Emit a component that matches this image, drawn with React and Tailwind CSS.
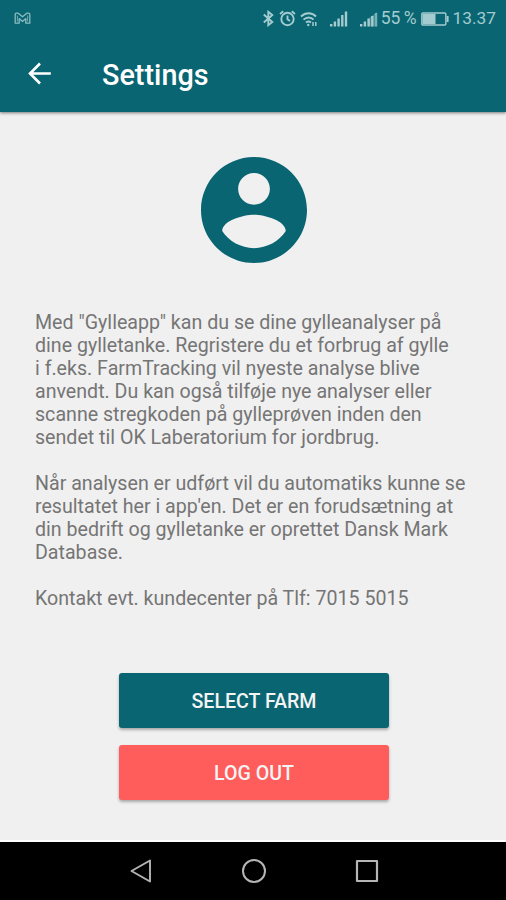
const infoLines = [
  ['Med "Gylleapp" kan du se dine gylleanalyser på', 'dine gylletanke. Regristere du et forbrug af gylle', 'i f.eks. FarmTracking vil nyeste analyse blive', 'anvendt. Du kan også tilføje nye analyser eller', 'scanne stregkoden på gylleprøven inden den', 'sendet til OK Laberatorium for jordbrug.'],
  ['Når analysen er udført vil du automatiks kunne se', "resultatet her i app'en. Det er en forudsætning at", 'din bedrift og gylletanke er oprettet Dansk Mark', 'Database.'],
  ['Kontakt evt. kundecenter på Tlf: 7015 5015'],
]

function IconSignal({ className, shaded }) {
  return (
    <svg width="18" height="16" viewBox="0 0 18 16" fill="currentColor" className={className}>
      {shaded && <path d="M9 15.5V7L17.2 1V15.5Z" opacity="0.35" />}
      <rect x="0" y="13" width="2.4" height="2.5" />
      <rect x="3.7" y="10.5" width="2.4" height="5" />
      <rect x="7.4" y="7.5" width="2.4" height="8" />
      <rect x="11.1" y={shaded ? 5 : 4} width="2.4" height={shaded ? 10.5 : 11.5} />
      <rect x="14.8" y={shaded ? 2 : 0.5} width="2.4" height={shaded ? 13.5 : 15} opacity={shaded ? 0.6 : 1} />
    </svg>
  )
}

function StatusBar() {
  return (
    <div className="flex h-9 items-center pt-px pr-[10px] pl-[14px] text-[#a3cbd0]">
      <svg width="17" height="13" viewBox="0 0 17 13" fill="none" stroke="currentColor" strokeWidth="1.3" strokeLinejoin="round" className="opacity-85">
        <path d="M1.2 2.5Q1.2 1.2 2.5 1.2H4.2L8.5 4.8L12.8 1.2H14.5Q15.8 1.2 15.8 2.5V11.2H11.8V6.6L8.5 9.4L5.2 6.6V11.2H1.2Z" />
        <path d="M3.4 3.5V9.5M13.6 3.5V9.5" strokeWidth="0.8" />
      </svg>
      <svg width="11" height="17" viewBox="0 0 11 17" fill="none" stroke="currentColor" strokeWidth="1.9" className="ml-auto">
        <path d="M0.8 4.5L9.3 12L5.3 15.2V1.8L9.3 5L0.8 12.5" />
      </svg>
      <svg width="17" height="17" viewBox="0 0 17 17" fill="none" stroke="currentColor" strokeWidth="1.9" className="ml-[5px]">
        <circle cx="8.5" cy="9" r="6.2" />
        <path d="M8.5 5.5V9.3L11 11M1 4L4.2 1.3M16 4L12.8 1.3" />
      </svg>
      <svg width="18" height="16" viewBox="0 0 18 16" fill="none" stroke="currentColor" strokeWidth="1.9" className="ml-[4px]">
        <path d="M1 5.5C5.5 1.2 12 1.2 16 5.5M3.5 8.7C6.5 5.7 11 5.7 13.5 8.7M6 11.5C7.5 10.2 9.5 10.2 11 11.5" />
        <circle cx="8.3" cy="14" r="1.2" fill="currentColor" stroke="none" />
        <path d="M13 11V15M15.8 11V15" strokeWidth="1.5" />
      </svg>
      <IconSignal className="ml-[12px]" />
      <IconSignal className="ml-[12px]" shaded />
      <span className="ml-[3px] text-[17.5px] leading-none whitespace-nowrap [word-spacing:-1px]">55 %</span>
      <svg width="28" height="14" viewBox="0 0 28 14" fill="none" stroke="currentColor" strokeWidth="1.4" className="ml-[4px]">
        <rect x="0.8" y="1" width="24" height="12" rx="1" />
        <rect x="1.5" y="2" width="13" height="10" fill="currentColor" stroke="none" />
        <path d="M26.6 4V10" strokeWidth="2" />
      </svg>
      <span className="ml-[4px] text-[17.3px] leading-none">13.37</span>
    </div>
  )
}

function AppBar() {
  return (
    <div className="flex h-[76px] items-center pl-7">
      <button type="button" aria-label="Back" className="text-white">
        <svg width="24" height="24" viewBox="0 0 24 24" fill="none" stroke="currentColor" strokeWidth="2.6">
          <path d="M22.8 11.5H2M12 1.5L2 11.5L12 21.5" />
        </svg>
      </button>
      <h1 className="mt-[2px] ml-[50px] text-[28.8px] leading-8 font-medium text-white">Settings</h1>
    </div>
  )
}

function ActionButton({ tone, children }) {
  return (
    <button
      type="button"
      className={`h-[55px] w-[270px] rounded-[3px] pt-[2px] text-[19.6px] font-medium text-[#f4f4f4] shadow-[0_2px_3px_rgba(0,0,0,0.3)] ${tone}`}
    >
      {children}
    </button>
  )
}

function NavBar() {
  return (
    <nav className="flex h-[60px] items-center justify-center gap-[89px] border-t-2 border-white bg-black pl-px text-[#b5b5b5]">
      <svg width="24" height="24" viewBox="0 0 24 24" fill="none" stroke="currentColor" strokeWidth="1.9" strokeLinejoin="round">
        <path d="M21 1.5V22.5L2.5 12Z" />
      </svg>
      <svg width="24" height="24" viewBox="0 0 24 24" fill="none" stroke="currentColor" strokeWidth="2">
        <circle cx="12" cy="12" r="11" />
      </svg>
      <svg width="24" height="24" viewBox="0 0 24 24" fill="none" stroke="currentColor" strokeWidth="2.2" strokeLinejoin="round">
        <rect x="2" y="2" width="20" height="20" />
      </svg>
    </nav>
  )
}

export default function App() {
  return (
    <div className="flex h-[900px] w-[506px] flex-col overflow-hidden bg-[#f0f0f0] font-['Roboto',sans-serif]">
      <header className="h-[112px] shrink-0 bg-[#096571] shadow-[0_1px_3px_rgba(0,0,0,0.5)]">
        <StatusBar />
        <AppBar />
      </header>

      <main className="flex flex-1 flex-col items-center pt-[45px] pl-[2px]">
        <svg width="106" height="106" viewBox="2 2 20 20" fill="#096571">
          <path d="M12 2C6.48 2 2 6.48 2 12s4.48 10 10 10 10-4.48 10-10S17.52 2 12 2zm0 3c1.66 0 3 1.34 3 3s-1.34 3-3 3-3-1.34-3-3 1.34-3 3-3zm0 14.2c-2.5 0-4.71-1.28-6-3.22.03-1.99 4-3.08 6-3.08 1.99 0 5.97 1.09 6 3.08-1.29 1.94-3.5 3.22-6 3.22z" />
        </svg>

        <div className="mt-12 flex w-full flex-col gap-[23px] pl-[33px] text-[19.62px] leading-[23px] text-[#757575]">
          {infoLines.map((lines) => (
            <p key={lines[0]}>
              {lines.map((line) => (
                <span key={line} className="block whitespace-nowrap">
                  {line}
                </span>
              ))}
            </p>
          ))}
        </div>

        <div className="mt-[63px] flex flex-col gap-[17px]">
          <ActionButton tone="bg-[#096571]">SELECT FARM</ActionButton>
          <ActionButton tone="bg-[#ff5c5c]">LOG OUT</ActionButton>
        </div>
      </main>

      <NavBar />
    </div>
  )
}
